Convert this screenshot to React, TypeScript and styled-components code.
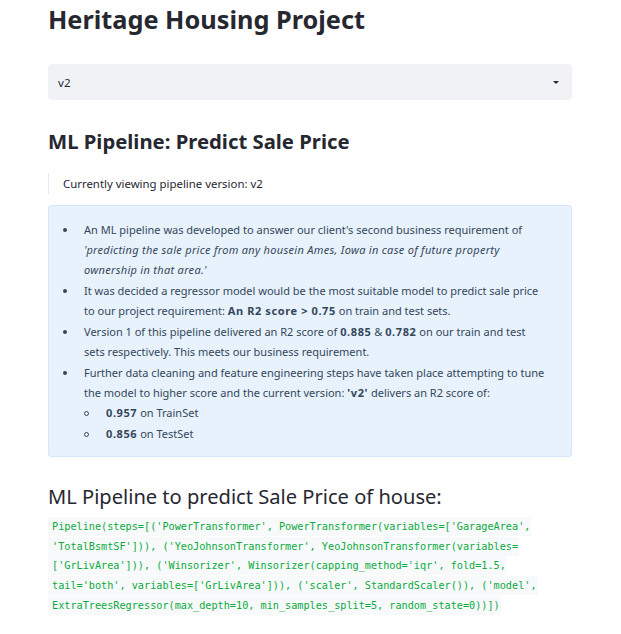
import React from "react";
import styled, { createGlobalStyle } from "styled-components";

const Global = createGlobalStyle`
  html, body { margin: 0; padding: 0; background: #ffffff; }
  body { font-family: "Noto Sans", "Open Sans", sans-serif; color: #262730; }
`;

const Page = styled.main`
  width: 524px;
  padding: 0 49px 0 48px;
  display: flex;
  flex-direction: column;
`;

const Title = styled.h1`
  margin: 0;
  padding-top: 2px;
  font-size: 25.3px;
  line-height: 34px;
  font-weight: 700;
  color: #262730;
`;

const Select = styled.div`
  margin-top: 28px;
  height: 36px;
  background: #f0f2f6;
  border-radius: 4px;
  display: flex;
  align-items: center;
  justify-content: space-between;
  padding: 0 13px 0 10px;
  font-size: 11.6px;
  color: #262730;
`;

const Caret = styled.span`
  width: 0;
  height: 0;
  border-left: 3px solid transparent;
  border-right: 3px solid transparent;
  border-top: 3px solid #262730;
`;

const H2 = styled.h2`
  margin: 28px 0 0;
  font-size: 20.3px;
  line-height: 26px;
  font-weight: 700;
  color: #262730;
`;

const Quote = styled.blockquote`
  margin: 19px 0 0;
  padding: 2px 0 2px 14px;
  border-left: 1px solid #e6e8ec;
  font-size: 11.4px;
  line-height: 17px;
  color: #262730;
`;

const Info = styled.section`
  margin-top: 11px;
  background: #e8f2fc;
  border: 1px solid #d6e7f9;
  border-radius: 3px;
  padding: 14px 23px 11px 16px;
  color: #33475b;
  font-size: 11px;
  line-height: 20px;
  em { letter-spacing: 0.3px; }
  strong { letter-spacing: 0.6px; }
`;

const List = styled.ul`
  margin: 0;
  padding: 0;
  list-style: none;
`;

const Item = styled.li<{ $circle?: boolean }>`
  position: relative;
  padding-left: ${(p) => (p.$circle ? "22px" : "19px")};
  margin-bottom: 1px;
  &::before {
    content: "";
    position: absolute;
    left: ${(p) => (p.$circle ? "0px" : "-2px")};
    top: 8px;
    width: ${(p) => (p.$circle ? "3px" : "4px")};
    height: ${(p) => (p.$circle ? "3px" : "4px")};
    border-radius: 50%;
    background: ${(p) => (p.$circle ? "transparent" : "#33475b")};
    border: ${(p) => (p.$circle ? "1px solid #33475b" : "none")};
  }
`;

const H3 = styled.h3`
  margin: 26px 0 0;
  font-size: 20.1px;
  line-height: 28px;
  font-weight: 400;
  color: #262730;
`;

const CodePara = styled.p`
  margin: 6px 0 0;
  font-size: 10.2px;
  line-height: 19.7px;
`;

const Code = styled.code`
  font-family: "DejaVu Sans Mono", "Liberation Mono", monospace;
  color: #09ab3b;
  background: #f8f9fb;
  padding: 4px 1px 4px 4px;
  -webkit-box-decoration-break: clone;
  box-decoration-break: clone;
  word-break: break-word;
`;

const pipeline =
  "Pipeline(steps=[('PowerTransformer', PowerTransformer(variables=['GarageArea', 'TotalBsmtSF'])), ('YeoJohnsonTransformer', YeoJohnsonTransformer(variables= ['GrLivArea'])), ('Winsorizer', Winsorizer(capping_method='iqr', fold=1.5, tail='both', variables=['GrLivArea'])), ('scaler', StandardScaler()), ('model', ExtraTreesRegressor(max_depth=10, min_samples_split=5, random_state=0))])";

export default function App() {
  return (
    <>
      <Global />
      <Page>
        <Title>Heritage Housing Project</Title>
        <Select>
          <span>v2</span>
          <Caret />
        </Select>
        <H2>ML Pipeline: Predict Sale Price</H2>
        <Quote>Currently viewing pipeline version: v2</Quote>
        <Info>
          <List>
            <Item>
              An ML pipeline was developed to answer our client's second business requirement of{" "}
              <em>'predicting the sale price from any housein Ames, Iowa in case of future property ownership in that area.'</em>
            </Item>
            <Item>
              It was decided a regressor model would be the most suitable model to predict sale price to our project
              requirement: <strong>An R2 score &gt; 0.75</strong> on train and test sets.
            </Item>
            <Item>
              Version 1 of this pipeline delivered an R2 score of <strong>0.885</strong> &amp; <strong>0.782</strong> on
              our train and test sets respectively. This meets our business requirement.
            </Item>
            <Item>
              Further data cleaning and feature engineering steps have taken place attempting to tune the model to higher
              score and the current version: <strong>'v2'</strong> delivers an R2 score of:
              <List>
                <Item $circle>
                  <strong>0.957</strong> on TrainSet
                </Item>
                <Item $circle>
                  <strong>0.856</strong> on TestSet
                </Item>
              </List>
            </Item>
          </List>
        </Info>
        <H3>ML Pipeline to predict Sale Price of house:</H3>
        <CodePara>
          <Code>{pipeline}</Code>
        </CodePara>
      </Page>
    </>
  );
}
